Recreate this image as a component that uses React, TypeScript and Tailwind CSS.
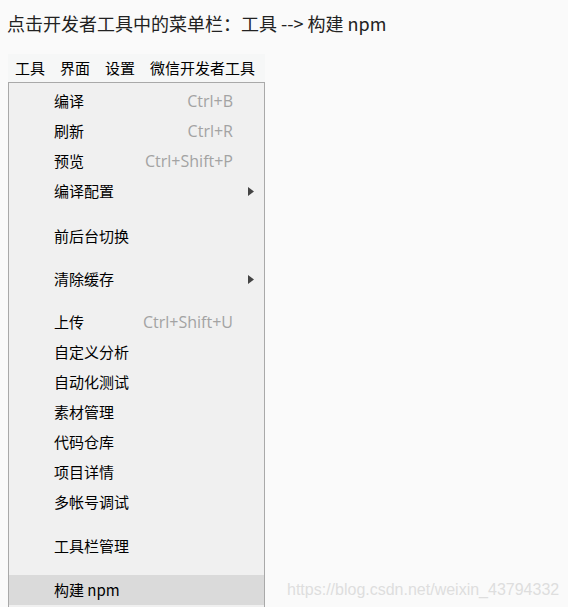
import React from 'react';

type Item =
  | { kind: 'item'; label: string; shortcut?: string; sub?: boolean; active?: boolean }
  | { kind: 'gap'; h: string };

const items: Item[] = [
  { kind: 'item', label: '编译', shortcut: 'Ctrl+B' },
  { kind: 'item', label: '刷新', shortcut: 'Ctrl+R' },
  { kind: 'item', label: '预览', shortcut: 'Ctrl+Shift+P' },
  { kind: 'item', label: '编译配置', sub: true },
  { kind: 'gap', h: 'h-[15px]' },
  { kind: 'item', label: '前后台切换' },
  { kind: 'gap', h: 'h-[13px]' },
  { kind: 'item', label: '清除缓存', sub: true },
  { kind: 'gap', h: 'h-[13px]' },
  { kind: 'item', label: '上传', shortcut: 'Ctrl+Shift+U' },
  { kind: 'item', label: '自定义分析' },
  { kind: 'item', label: '自动化测试' },
  { kind: 'item', label: '素材管理' },
  { kind: 'item', label: '代码仓库' },
  { kind: 'item', label: '项目详情' },
  { kind: 'item', label: '多帐号调试' },
  { kind: 'gap', h: 'h-[14px]' },
  { kind: 'item', label: '工具栏管理' },
  { kind: 'gap', h: 'h-[14px]' },
  { kind: 'item', label: '构建 npm', active: true },
];

const cjk = { fontFamily: '"Noto Sans CJK SC", "Noto Sans", sans-serif' };

export default function App() {
  return (
    <div className="relative w-[568px] h-[607px] overflow-hidden bg-[#fafafa] text-[#222]" style={cjk}>
      <p className="pl-[7px] pt-[9px] text-[18px] leading-[28px] text-[#222]">
        点击开发者工具中的菜单栏：工具 --&gt; 构建 npm
      </p>

      <div className="ml-[8px] mt-[17px] w-[257px]">
        {/* menu bar */}
        <div className="flex h-[28px] items-center gap-[15px] bg-[#f6f7f7] pl-[7px] text-[15px] text-[#000]">
          <span>工具</span>
          <span>界面</span>
          <span>设置</span>
          <span>微信开发者工具</span>
        </div>

        {/* dropdown */}
        <div className="h-[600px] border border-[#a9a9a9] bg-[#f0f0f0] pt-[3px]">
          {items.map((it, i) =>
            it.kind === 'gap' ? (
              <div key={i} className={it.h} />
            ) : (
              <div
                key={i}
                className={`relative flex h-[30px] items-center pl-[45px] pr-[31px] text-[15px] text-[#000] ${
                  it.active ? 'bg-[#dadada]' : ''
                }`}
              >
                <span className="flex-1">{it.label}</span>
                {it.shortcut && (
                  <span className="text-[16px] text-[#a3a3a3]" style={{ fontFamily: '"Open Sans", "Noto Sans", sans-serif' }}>
                    {it.shortcut}
                  </span>
                )}
                {it.sub && (
                  <svg className="absolute right-[10px] top-[11px]" width="6" height="9" viewBox="0 0 6 9">
                    <path d="M0 0 L6 4.5 L0 9 Z" fill="#444" />
                  </svg>
                )}
              </div>
            )
          )}
        </div>
      </div>

      <div
        className="absolute left-[287px] top-[578px] text-[16px] text-[#dedede]"
        style={{ fontFamily: '"Liberation Sans", Arial, sans-serif' }}
      >
        https://blog.csdn.net/weixin_43794332
      </div>
    </div>
  );
}
